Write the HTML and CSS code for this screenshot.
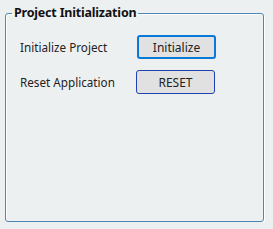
FILE: index.html
```html
<!DOCTYPE html>
<html lang="en">

<head>
  <meta charset="UTF-8">
  <meta name="viewport" content="width=device-width, initial-scale=1.0">
  <title>Project Initialization</title>
  <link rel="stylesheet" href="styles.css">
</head>

<body>
  <fieldset class="groupBox">
    <legend>Project Initialization</legend>

    <div class="row">
      <span class="label">Initialize Project</span>
      <button class="btn focused">Initialize</button>
    </div>

    <div class="row">
      <span class="label">Reset Application</span>
      <button class="btn">RESET</button>
    </div>
  </fieldset>
</body>

</html>
```

FILE: styles.css
```css
body {
  margin: 0;
  padding: 5px 0 0 5px;
  background-color: #edf0f1;
  font-family: "Noto Sans", sans-serif;
  color: #222;
}

.groupBox {
  width: 259px;
  height: 217px;
  box-sizing: border-box;
  margin: 0;
  padding: 14px 0 0 14px;
  border: 1px solid #4f86b6;
  border-radius: 3px;
  box-shadow: inset 1px 1px 0 #fff, 1px 1px 0 #fff;
}

.groupBox legend {
  margin-left: -8px;
  padding: 0 2px;
  font-size: 12.5px;
  font-weight: bold;
  line-height: 16px;
  letter-spacing: -0.2px;
  color: #111;
}

.row {
  display: flex;
  align-items: center;
  margin-bottom: 11px;
}

.label {
  width: 116px;
  font-size: 11.7px;
}

.btn {
  width: 79px;
  height: 24px;
  box-sizing: border-box;
  padding: 0;
  border: 1px solid #1e43b0;
  border-radius: 3px;
  background-color: #e1e1e1;
  font-family: "Noto Sans", sans-serif;
  font-size: 12px;
  color: #222;
}

.btn.focused {
  margin-left: 1px;
  border: 2px solid #0a78d7;
}
```
